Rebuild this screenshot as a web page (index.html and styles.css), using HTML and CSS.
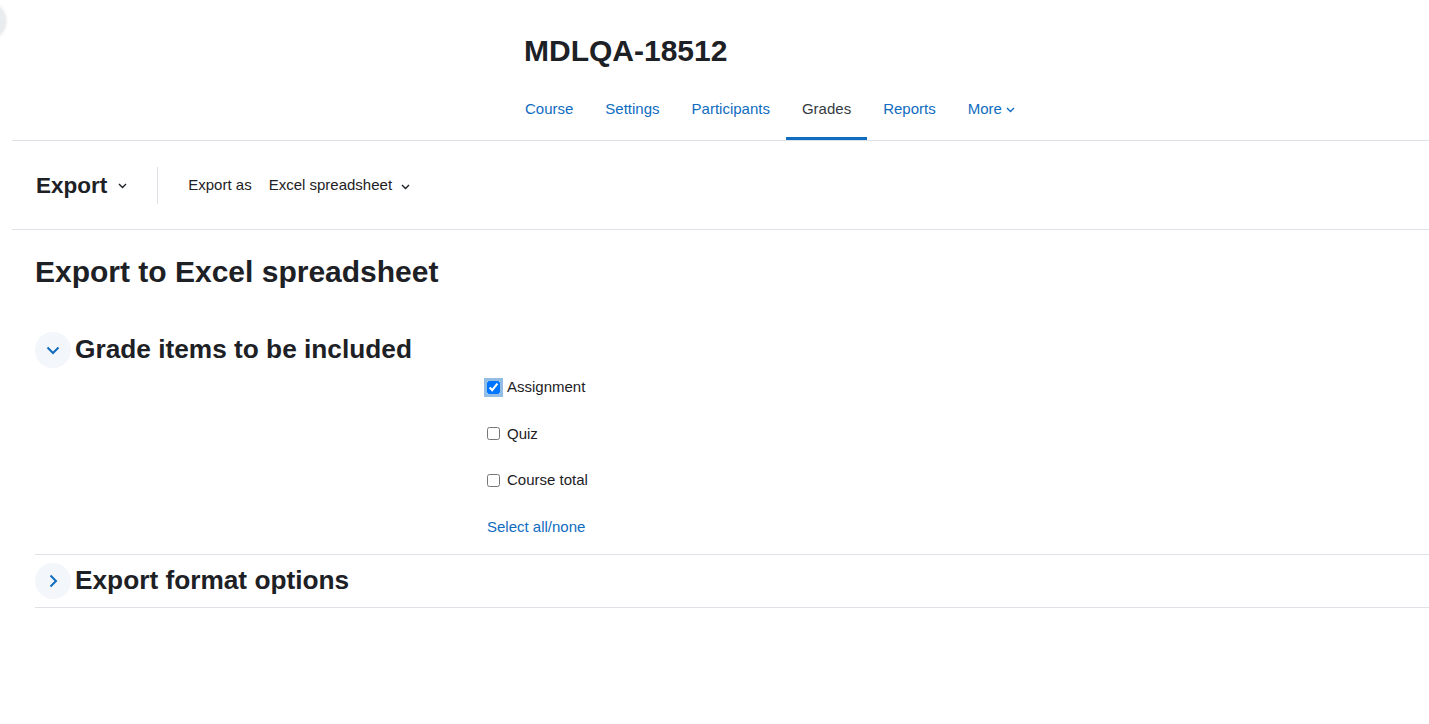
FILE: index.html
```html
<!DOCTYPE html>
<html lang="en">
<head>
<meta charset="utf-8">
<title>MDLQA-18512: Export to Excel spreadsheet</title>
<link rel="stylesheet" href="styles.css">
</head>
<body>
<div class="drawer-btn"></div>
<div class="page">
  <header class="page-header">
    <h1 class="course-title">MDLQA-18512</h1>
    <nav class="secondary-nav">
      <ul>
        <li><a class="nav-link" href="#">Course</a></li>
        <li><a class="nav-link" href="#">Settings</a></li>
        <li><a class="nav-link" href="#">Participants</a></li>
        <li><a class="nav-link active" href="#">Grades</a></li>
        <li><a class="nav-link" href="#">Reports</a></li>
        <li><a class="nav-link" href="#">More <svg class="caret" width="9" height="6" viewBox="0 0 9 6"><polyline points="1,1 4.5,4.5 8,1" fill="none" stroke="currentColor" stroke-width="1.4"/></svg></a></li>
      </ul>
    </nav>
  </header>

  <div class="tertiary">
    <div class="tn-title">
      <span class="tn-heading">Export</span>
      <svg class="caret dark" width="9" height="6" viewBox="0 0 9 6"><polyline points="1,1 4.5,4.5 8,1" fill="none" stroke="currentColor" stroke-width="1.4"/></svg>
    </div>
    <div class="tn-divider"></div>
    <div class="tn-select">
      <span class="tn-label">Export as</span>
      <span class="tn-value">Excel spreadsheet <svg class="caret dark" width="9" height="6" viewBox="0 0 9 6"><polyline points="1,1 4.5,4.5 8,1" fill="none" stroke="currentColor" stroke-width="1.4"/></svg></span>
    </div>
  </div>

  <main class="content">
    <h2 class="page-title">Export to Excel spreadsheet</h2>

    <fieldset class="coll">
      <div class="legend">
        <span class="toggle"><svg width="14" height="9" viewBox="0 0 14 9"><polyline points="1.5,1.5 7,7 12.5,1.5" fill="none" stroke="#0f6cbf" stroke-width="2"/></svg></span>
        <h3>Grade items to be included</h3>
      </div>
      <div class="fitems">
        <div class="frow"><label class="check"><input type="checkbox" class="focused" checked> Assignment</label></div>
        <div class="frow"><label class="check"><input type="checkbox"> Quiz</label></div>
        <div class="frow"><label class="check"><input type="checkbox"> Course total</label></div>
        <div class="frow"><a class="link" href="#">Select all/none</a></div>
      </div>
    </fieldset>

    <fieldset class="coll collapsed">
      <div class="legend">
        <span class="toggle"><svg width="9" height="14" viewBox="0 0 9 14"><polyline points="1.5,1.5 7,7 1.5,12.5" fill="none" stroke="#0f6cbf" stroke-width="2"/></svg></span>
        <h3>Export format options</h3>
      </div>
    </fieldset>
  </main>
</div>
</body>
</html>
```

FILE: styles.css
```css
* { box-sizing: border-box; }

html, body {
  margin: 0;
  padding: 0;
  background: #ffffff;
}

body {
  font-family: "Liberation Sans", Arial, sans-serif;
  font-size: 15px;
  line-height: 1.5;
  color: #1d2125;
  overflow: hidden;
}

.drawer-btn {
  position: absolute;
  left: -31px;
  top: 2px;
  width: 36px;
  height: 36px;
  border-radius: 50%;
  background: #e9ecef;
  box-shadow: 0 1px 4px rgba(0, 0, 0, 0.18);
}

.page {
  margin-left: 12px;
}

/* header */
.page-header {
  padding-top: 33px;
  border-bottom: 1px solid #dee2e6;
}

.course-title {
  margin: 0 0 0 512px;
  font-size: 30px;
  line-height: 1.2;
  font-weight: 700;
}

.secondary-nav ul {
  list-style: none;
  margin: 20px 0 0 497px;
  padding: 0;
  display: flex;
}

.nav-link {
  display: flex;
  align-items: center;
  gap: 4px;
  padding: 9px 16px 16.5px;
  border-bottom: 3px solid transparent;
  color: #0f6cbf;
  text-decoration: none;
  line-height: 22.5px;
}

.nav-link.active {
  color: #343a40;
  border-bottom-color: #0f6cbf;
}

.caret { display: block; margin-top: 2px; }
.caret.dark { color: #1d2125; }

/* tertiary navigation */
.tertiary {
  display: flex;
  align-items: center;
  padding: 26px 0 25px 24px;
  border-bottom: 1px solid #dee2e6;
}

.tn-title {
  display: flex;
  align-items: center;
  gap: 11px;
  margin-top: -1px;
}

.tn-heading {
  font-size: 22.5px;
  font-weight: 700;
  line-height: 1.2;
}

.tn-divider {
  width: 1px;
  height: 37px;
  background: #dee2e6;
  margin: 0 30px 0 30px;
}

.tn-select {
  display: flex;
  align-items: center;
  gap: 17px;
}

.tn-value {
  display: flex;
  align-items: center;
  gap: 9px;
}

/* content */
.content {
  padding-left: 23px;
}

.page-title {
  margin: 24px 0 0;
  font-size: 30px;
  line-height: 1.2;
  font-weight: 700;
}

fieldset.coll {
  margin: 0;
  padding: 0 0 16px;
  border: 0;
  border-bottom: 1px solid #dee2e6;
  min-width: 0;
}

fieldset.coll:first-of-type {
  margin-top: 42px;
}

fieldset.collapsed {
  padding: 8px 0 8px;
}

.legend {
  display: flex;
  align-items: center;
  gap: 4px;
}

.toggle {
  width: 36px;
  height: 36px;
  border-radius: 50%;
  background: #f3f6fa;
  display: flex;
  align-items: center;
  justify-content: center;
  flex: none;
}

.legend h3 {
  margin: 0;
  font-size: 26.25px;
  line-height: 1.2;
  font-weight: 700;
}

.fitems {
  padding: 8px 0 0 452px;
}

.frow {
  height: 22.5px;
  margin-bottom: 24px;
  display: flex;
  align-items: center;
}

.frow:last-child { margin-bottom: 0; }

.check {
  display: flex;
  align-items: center;
  gap: 7px;
}

.check input {
  width: 13px;
  height: 13px;
  margin: 0;
}

.check input.focused {
  box-shadow: 0 0 0 3px rgba(15, 108, 191, 0.45);
}

.link {
  color: #0f6cbf;
  text-decoration: none;
}
```
